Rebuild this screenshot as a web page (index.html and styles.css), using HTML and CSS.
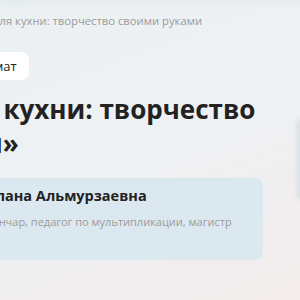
FILE: index.html
```html
<!DOCTYPE html>
<html lang="ru">
<head>
    <meta charset="UTF-8">
    <meta name="viewport" content="width=device-width, initial-scale=1.0">
    <title>Керамика для кухни: творчество своими руками</title>
    <link rel="stylesheet" href="styles.css">
</head>
<body>
    <div class="site-header"></div>
    <div class="page">
        <main class="course">
            <nav class="crumbs">Главная / Мастер-классы / Керамика для кухни: творчество своими руками</nav>
            <div class="tags">
                <span class="tag">Для взрослых</span>
                <span class="tag">Онлайн-формат</span>
            </div>
            <h1 class="title">«Керамика для кухни: творчество своими руками»</h1>
            <div class="author">
                <div class="avatar"></div>
                <div class="author-info">
                    <div class="author-name">Абдурахимова Милана Альмурзаевна</div>
                    <div class="author-desc">Художник-иллюстратор, гончар, педагог по мультипликации, магистр</div>
                </div>
            </div>
        </main>
        <aside class="side">
            <div class="side-card"></div>
        </aside>
    </div>
</body>
</html>
```

FILE: styles.css
```css
:root {
    --text-color: #222;
    --muted-color: #9b9b9b;
    --card-color: #dce8ef;
}

* {
    box-sizing: border-box;
    margin: 0;
    padding: 0;
}

html, body {
    height: 100%;
}

body {
    font-family: 'Open Sans', 'Noto Sans', sans-serif;
    color: var(--text-color);
    background: linear-gradient(160deg, #ebf0f3 0%, #eef1f3 45%, #f3ecec 100%);
    overflow: hidden;
}

.site-header {
    height: 0;
    box-shadow: 0 0 8px 1px rgba(0,0,0,0.12);
}

.page {
    display: flex;
    gap: 34px;
    margin-left: -213px;
}

.course {
    width: 476px;
    flex-shrink: 0;
}

.crumbs {
    margin-top: 13px;
    padding-left: 3px;
    font-size: 11.25px;
    line-height: 16px;
    color: var(--muted-color);
    white-space: nowrap;
}

.tags {
    display: flex;
    gap: 5px;
    margin-top: 23px;
}

.tag {
    background: #fff;
    border-radius: 8px;
    padding: 5px 12px;
    font-size: 13px;
    line-height: 18px;
    white-space: nowrap;
}

.title {
    margin-top: 12px;
    margin-right: -20px;
    font-size: 26px;
    line-height: 34px;
    font-weight: 700;
}

.author {
    display: flex;
    gap: 8px;
    margin-top: 18px;
    padding: 8px 12px;
    height: 82px;
    background: var(--card-color);
    border-radius: 8px;
}

.avatar {
    width: 48px;
    height: 48px;
    margin-top: 8px;
    border-radius: 50%;
    background: #c9d6de;
    flex-shrink: 0;
}

.author-name {
    font-size: 14.5px;
    line-height: 20px;
    font-weight: 700;
    white-space: nowrap;
}

.author-desc {
    margin-top: 7px;
    font-size: 11px;
    line-height: 18px;
    color: var(--muted-color);
    white-space: nowrap;
}

.side {
    padding-top: 118px;
}

.side-card {
    width: 260px;
    height: 82px;
    background: #dfe4e8;
    border-radius: 8px;
    box-shadow: 0 0 6px rgba(0,0,0,0.08);
}
```
